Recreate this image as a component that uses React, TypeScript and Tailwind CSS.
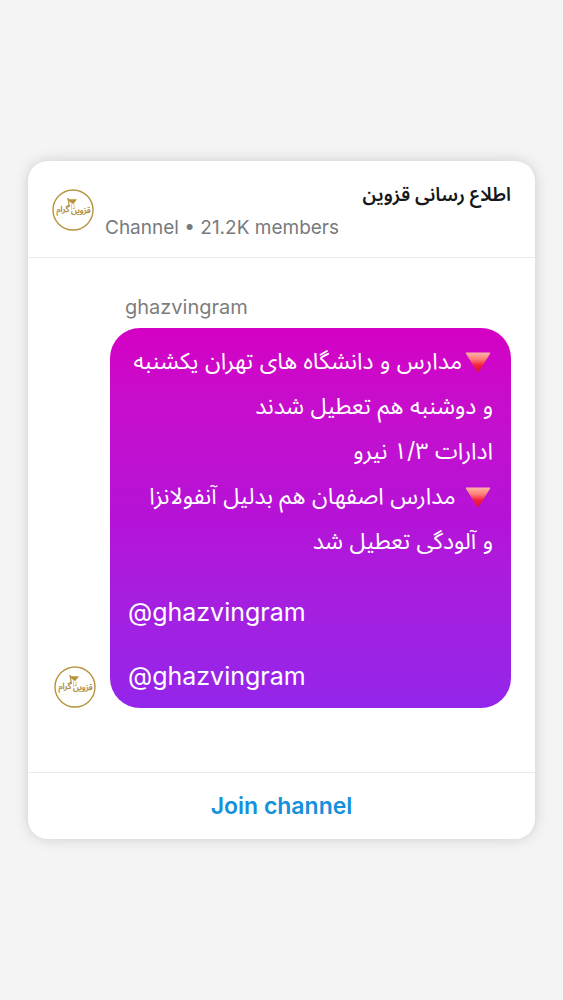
import React from 'react'

const FONT = "font-[Inter,'Noto_Sans_Arabic','DejaVu_Sans',sans-serif]"

function ChannelLogo() {
    return (
        <svg viewBox="0 0 42 42" className="size-[42px] shrink-0" role="img" aria-label="قزوین گرام">
            <circle cx="21" cy="21" r="20" fill="#fff" stroke="#b8933f" strokeWidth="1.4" />
            <path d="M15 8.5 L17.5 10.2 H25 L21.6 14.8 H20.2 L17.5 12.5 Z" fill="#b8933f" />
            <path d="M16 9 L17.4 18" stroke="#b8933f" strokeWidth="1.3" />
            <path d="M19.6 15 V21 M22.1 15 V20" stroke="#d9c48d" strokeWidth="0.9" />
            <path d="M6 28.5 H13" stroke="#e7d8ae" strokeWidth="0.5" strokeDasharray="1 0.6" />
            <g fill="#b8933f" stroke="#b8933f" strokeWidth="0.4" fontFamily="'Noto Sans Arabic','DejaVu Sans',sans-serif" fontSize="8.5">
                <text x="28.8" y="24" textAnchor="middle">قزوین</text>
                <text x="10.8" y="23" textAnchor="middle">گرام</text>
            </g>
        </svg>
    )
}

function RedTriangle() {
    return (
        <svg viewBox="0 0 26 23" className="ms-[2px] me-[3px] inline-block h-[23px] w-[26px] align-text-bottom" aria-hidden="true">
            <defs>
                <linearGradient id="triangle" x1="0" y1="0" x2="0" y2="1">
                    <stop offset="0" stopColor="#ffb3a6" />
                    <stop offset="0.35" stopColor="#fb7f78" />
                    <stop offset="0.65" stopColor="#f51f3d" />
                    <stop offset="1" stopColor="#d9103c" />
                </linearGradient>
            </defs>
            <path d="M1.5 0.5 H24.5 Q25.8 0.5 25 1.8 L14 19.4 Q13 20.6 12 19.4 L1 1.8 Q0.2 0.5 1.5 0.5 Z" fill="url(#triangle)" />
        </svg>
    )
}

function Message() {
    return (
        <div className="min-w-0 flex-1 rounded-[30px] bg-linear-to-b from-[#d400c4] via-[#b512d7] to-[#9325ea] px-[18px] pt-[11px] text-white">
            <div dir="rtl" className="text-[23px] leading-[45px] whitespace-nowrap">
                <p className="h-[45px]"><RedTriangle />مدارس و دانشگاه های تهران یکشنبه</p>
                <p>و دوشنبه هم تعطیل شدند</p>
                <p>ادارات ۱/۳ نیرو</p>
                <p className="h-[45px]"><RedTriangle /> مدارس اصفهان هم بدلیل آنفولانزا</p>
                <p>و آلودگی تعطیل شد</p>
            </div>
            <div className="mt-4 text-[25px] leading-[64px]">
                <p>@ghazvingram</p>
                <p>@ghazvingram</p>
            </div>
        </div>
    )
}

export default function App() {
    return (
        <main className={`flex min-h-screen items-center bg-[#f4f4f4] px-7 ${FONT}`}>
            <article className="w-full rounded-[20px] bg-white shadow-[0_0_14px_rgba(0,0,0,0.16)]">
                <header className="flex items-start gap-[11px] border-b border-[#ebebeb] px-6 pt-5 pb-[14px]">
                    <div className="pt-2">
                        <ChannelLogo />
                    </div>
                    <div className="min-w-0 flex-1">
                        <h1 dir="rtl" className="text-[19px] leading-7 font-semibold text-[#16181a]">اطلاع رسانی قزوین</h1>
                        <p className="mt-1 text-[19px] leading-[30px] text-[#777a7e]">Channel • 21.2K members</p>
                    </div>
                </header>

                <section className="ps-[26px] pe-6 pt-[34px] pb-16">
                    <p className="ms-[71px] mb-[6px] text-xl leading-[30px] text-[#7d7d7d]">ghazvingram</p>
                    <div className="flex items-end gap-[14px]">
                        <ChannelLogo />
                        <Message />
                    </div>
                </section>

                <footer className="border-t border-[#ebebeb]">
                    <button type="button" className="h-[66px] w-full cursor-pointer text-[23px] font-semibold text-[#1590dc]">
                        Join channel
                    </button>
                </footer>
            </article>
        </main>
    )
}
